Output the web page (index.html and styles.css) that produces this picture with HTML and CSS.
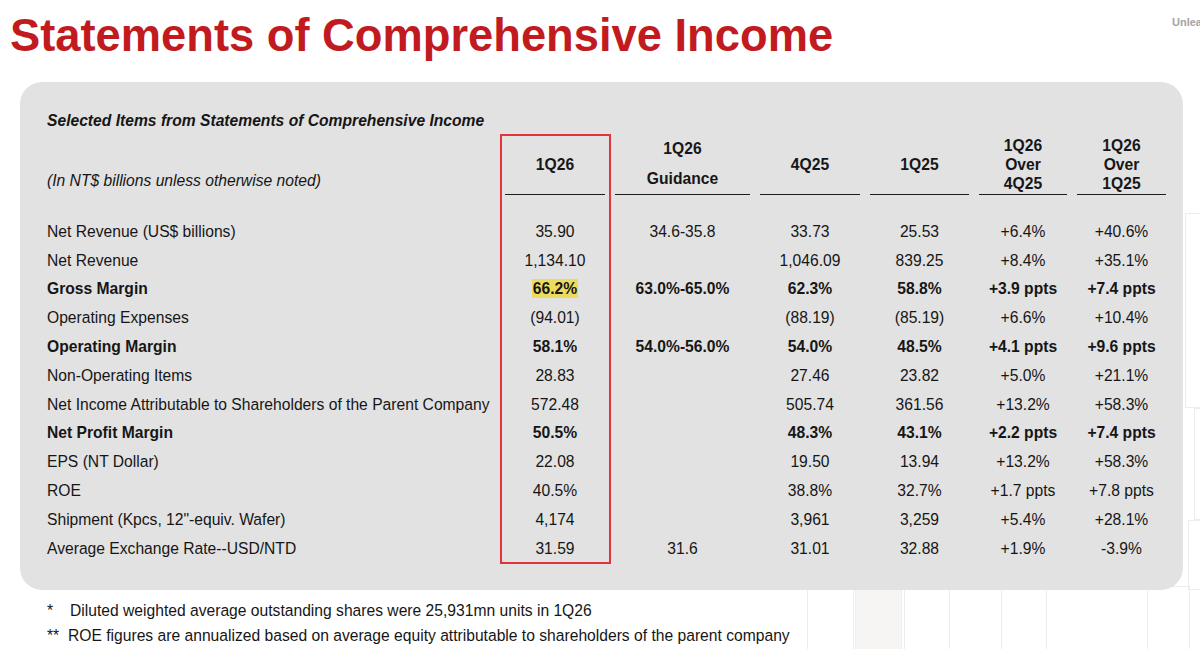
FILE: index.html
```html
<!DOCTYPE html>
<html lang="en">
<head>
<meta charset="utf-8">
<title>Statements of Comprehensive Income</title>
<link rel="stylesheet" href="styles.css">
</head>
<body>
<div class="ghosts" aria-hidden="true">
  <div class="ghost g1"></div>
  <div class="ghost g2"></div>
  <div class="ghost g3"></div>
  <div class="ghost g4"></div>
  <div class="ghost g5"></div>
  <div class="ghost g6"></div>
  <div class="ghost g7"></div>
  <div class="ghost g8"></div>
</div>

<header class="top">
  <h1 class="title">Statements of Comprehensive Income</h1>
  <span class="tag">Unleash Innovation</span>
</header>

<section class="panel">
  <div class="caption">Selected Items from Statements of Comprehensive Income</div>
  <div class="table">
    <div class="focus"></div>
    <div class="row head">
      <div class="unit">(In NT$ billions unless otherwise noted)</div>
      <div class="th">1Q26</div>
      <div class="th th-guide"><span>1Q26</span><span>Guidance</span></div>
      <div class="th">4Q25</div>
      <div class="th">1Q25</div>
      <div class="th"><span>1Q26</span><span>Over</span><span>4Q25</span></div>
      <div class="th"><span>1Q26</span><span>Over</span><span>1Q25</span></div>
    </div>
    <div class="spacer"></div>
    <div class="row"><div class="lbl">Net Revenue (US$ billions)</div><div class="td">35.90</div><div class="td">34.6-35.8</div><div class="td">33.73</div><div class="td">25.53</div><div class="td">+6.4%</div><div class="td">+40.6%</div></div>
    <div class="row"><div class="lbl">Net Revenue</div><div class="td">1,134.10</div><div class="td"></div><div class="td">1,046.09</div><div class="td">839.25</div><div class="td">+8.4%</div><div class="td">+35.1%</div></div>
    <div class="row bold"><div class="lbl">Gross Margin</div><div class="td"><span class="mark-yellow">66.2%</span></div><div class="td">63.0%-65.0%</div><div class="td">62.3%</div><div class="td">58.8%</div><div class="td">+3.9 ppts</div><div class="td">+7.4 ppts</div></div>
    <div class="row"><div class="lbl">Operating Expenses</div><div class="td">(94.01)</div><div class="td"></div><div class="td">(88.19)</div><div class="td">(85.19)</div><div class="td">+6.6%</div><div class="td">+10.4%</div></div>
    <div class="row bold"><div class="lbl">Operating Margin</div><div class="td">58.1%</div><div class="td">54.0%-56.0%</div><div class="td">54.0%</div><div class="td">48.5%</div><div class="td">+4.1 ppts</div><div class="td">+9.6 ppts</div></div>
    <div class="row"><div class="lbl">Non-Operating Items</div><div class="td">28.83</div><div class="td"></div><div class="td">27.46</div><div class="td">23.82</div><div class="td">+5.0%</div><div class="td">+21.1%</div></div>
    <div class="row"><div class="lbl">Net Income Attributable to Shareholders of the Parent Company</div><div class="td">572.48</div><div class="td"></div><div class="td">505.74</div><div class="td">361.56</div><div class="td">+13.2%</div><div class="td">+58.3%</div></div>
    <div class="row bold"><div class="lbl">Net Profit Margin</div><div class="td">50.5%</div><div class="td"></div><div class="td">48.3%</div><div class="td">43.1%</div><div class="td">+2.2 ppts</div><div class="td">+7.4 ppts</div></div>
    <div class="row"><div class="lbl">EPS (NT Dollar)</div><div class="td">22.08</div><div class="td"></div><div class="td">19.50</div><div class="td">13.94</div><div class="td">+13.2%</div><div class="td">+58.3%</div></div>
    <div class="row"><div class="lbl">ROE</div><div class="td">40.5%</div><div class="td"></div><div class="td">38.8%</div><div class="td">32.7%</div><div class="td">+1.7 ppts</div><div class="td">+7.8 ppts</div></div>
    <div class="row"><div class="lbl">Shipment (Kpcs, 12"-equiv. Wafer)</div><div class="td">4,174</div><div class="td"></div><div class="td">3,961</div><div class="td">3,259</div><div class="td">+5.4%</div><div class="td">+28.1%</div></div>
    <div class="row"><div class="lbl">Average Exchange Rate--USD/NTD</div><div class="td">31.59</div><div class="td">31.6</div><div class="td">31.01</div><div class="td">32.88</div><div class="td">+1.9%</div><div class="td">-3.9%</div></div>
  </div>
</section>

<div class="notes">
  <p class="note"><span class="star">*</span>Diluted weighted average outstanding shares were 25,931mn units in 1Q26</p>
  <p class="note"><span class="star star-dbl">**</span>ROE figures are annualized based on average equity attributable to shareholders of the parent company</p>
</div>
</body>
</html>
```

FILE: styles.css
```css
* { box-sizing: border-box; }

body {
  margin: 0;
  width: 1200px;
  height: 649px;
  overflow: hidden;
  position: relative;
  background: #ffffff;
  color: #161616;
  font-family: "Liberation Sans", Arial, sans-serif;
}

/* faint background chart ghosts */
.ghosts { position: absolute; inset: 0; z-index: 0; }
.ghost { position: absolute; border: 1px solid #ededed; }
.g1 { left: 807px; top: 586px; width: 47px; height: 70px; }
.g2 { left: 855px; top: 586px; width: 47px; height: 70px; background: #f6f5f4; border-color: #f0efee; }
.g3 { left: 904px; top: 586px; width: 46px; height: 70px; }
.g4 { left: 1001px; top: 586px; width: 46px; height: 70px; }
.g5 { left: 1147px; top: 586px; width: 43px; height: 70px; }
.g6 { left: 1185px; top: 213px; width: 30px; height: 195px; }
.g7 { left: 1194px; top: 408px; width: 30px; height: 112px; }
.g8 { left: 1188px; top: 520px; width: 30px; height: 70px; }

.top {
  position: relative;
  z-index: 1;
  height: 82px;
  padding: 10px 0 0 10px;
  display: flex;
  justify-content: space-between;
  align-items: flex-start;
}

.title {
  margin: 0;
  font-size: 45.3px;
  line-height: 52px;
  font-weight: 700;
  color: #c21b1f;
  white-space: nowrap;
}

.tag {
  width: 28px;
  flex: none;
  margin-top: 6px;
  font-size: 11px;
  line-height: 13px;
  font-weight: 700;
  color: #a3a3a3;
  white-space: nowrap;
  overflow: visible;
}

.panel {
  position: relative;
  z-index: 1;
  margin-left: 20px;
  width: 1163px;
  height: 508px;
  padding: 30px 13px 0 27px;
  background: #e2e2e2;
  border-radius: 22px;
  font-size: 15.65px;
}

.caption {
  font-weight: 700;
  font-style: italic;
  line-height: 18px;
}

.table {
  position: relative;
  margin-top: 4px;
}

.row {
  display: grid;
  grid-template-columns: 453px 110px 145px 110px 109px 98px 99px;
  height: 28.8px;
  align-items: center;
}

.row.head {
  height: 59px;
  align-items: stretch;
}

.unit {
  align-self: end;
  padding-bottom: 5px;
  font-style: italic;
  line-height: 18px;
}

.th {
  margin: 0 5px;
  display: flex;
  flex-direction: column;
  justify-content: center;
  align-items: center;
  padding-bottom: 0;
  font-weight: 700;
  line-height: 19px;
  border-bottom: 1.3px solid #1c1c1c;
}

.th-guide { line-height: 30px; }

.spacer { height: 24.4px; }

.td { text-align: center; white-space: nowrap; }

.lbl { white-space: nowrap; }

.row.bold { font-weight: 700; }

.mark-yellow {
  background: #ecdb5c;
  padding: 1px 1px;
}

.focus {
  position: absolute;
  left: 453px;
  top: 0;
  width: 111px;
  height: 430px;
  border: 2.5px solid #e1353b;
  pointer-events: none;
}

.notes {
  position: relative;
  z-index: 1;
  margin-top: 8px;
  padding-left: 47px;
  font-size: 15.65px;
  line-height: 25px;
}

.note { margin: 0; white-space: nowrap; }

.star { display: inline-block; width: 23px; }
.star-dbl { width: 21px; }
```
